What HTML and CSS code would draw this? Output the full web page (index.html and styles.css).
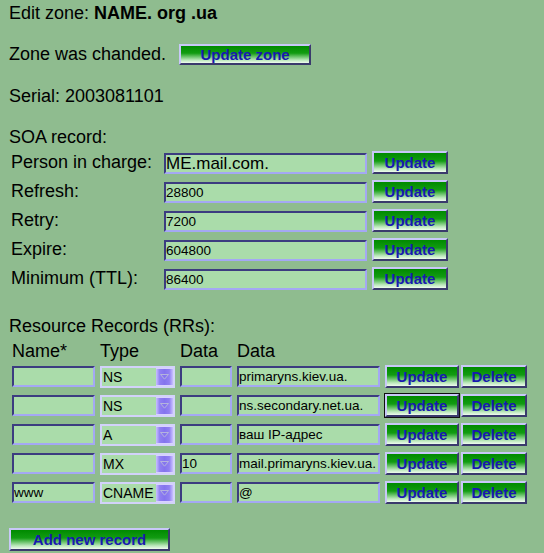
FILE: index.html
```html
<!DOCTYPE html>
<html lang="en">
<head>
<meta charset="utf-8">
<title>Edit zone</title>
<link rel="stylesheet" href="styles.css">
</head>
<body>
<form class="page">
  <div class="title">Edit zone: <b>NAME. org .ua</b></div>

  <div class="status">
    <span>Zone was chanded.</span>
    <button type="button" class="btn btn-zone">Update zone</button>
  </div>

  <div class="serial">Serial: 2003081101</div>

  <div class="section-title soa-title">SOA record:</div>
  <div class="soa-grid">
    <label class="soa-label">Person in charge:</label>
    <input class="field field-lg" value="ME.mail.com.">
    <button type="button" class="btn btn-soa">Update</button>

    <label class="soa-label">Refresh:</label>
    <input class="field" value="28800">
    <button type="button" class="btn btn-soa">Update</button>

    <label class="soa-label">Retry:</label>
    <input class="field" value="7200">
    <button type="button" class="btn btn-soa">Update</button>

    <label class="soa-label">Expire:</label>
    <input class="field" value="604800">
    <button type="button" class="btn btn-soa">Update</button>

    <label class="soa-label">Minimum (TTL):</label>
    <input class="field" value="86400">
    <button type="button" class="btn btn-soa">Update</button>
  </div>

  <div class="section-title rr-title">Resource Records (RRs):</div>
  <div class="rr-cols rr-head">
    <span>Name*</span><span>Type</span><span>Data</span><span>Data</span>
  </div>
  <div class="rr-rows">
    <div class="rr-cols rr-row">
      <input class="field" value="">
      <div class="select"><select class="select-native"><option>NS</option></select><span class="select-arrow"><svg width="9" height="6" viewBox="0 0 9 6"><path d="M0.5 0.5 H8.5 L4.5 5.2 Z" fill="none" stroke="#b4b4dc" stroke-width="1"/></svg></span></div>
      <input class="field" value="">
      <input class="field" value="primaryns.kiev.ua.">
      <div class="actions"><button type="button" class="btn btn-upd">Update</button><button type="button" class="btn btn-del">Delete</button></div>
    </div>
    <div class="rr-cols rr-row">
      <input class="field" value="">
      <div class="select"><select class="select-native"><option>NS</option></select><span class="select-arrow"><svg width="9" height="6" viewBox="0 0 9 6"><path d="M0.5 0.5 H8.5 L4.5 5.2 Z" fill="none" stroke="#b4b4dc" stroke-width="1"/></svg></span></div>
      <input class="field" value="">
      <input class="field" value="ns.secondary.net.ua.">
      <div class="actions"><button type="button" class="btn btn-upd is-focused">Update</button><button type="button" class="btn btn-del">Delete</button></div>
    </div>
    <div class="rr-cols rr-row">
      <input class="field" value="">
      <div class="select"><select class="select-native"><option>A</option></select><span class="select-arrow"><svg width="9" height="6" viewBox="0 0 9 6"><path d="M0.5 0.5 H8.5 L4.5 5.2 Z" fill="none" stroke="#b4b4dc" stroke-width="1"/></svg></span></div>
      <input class="field" value="">
      <input class="field" value="ваш IP-адрес">
      <div class="actions"><button type="button" class="btn btn-upd">Update</button><button type="button" class="btn btn-del">Delete</button></div>
    </div>
    <div class="rr-cols rr-row">
      <input class="field" value="">
      <div class="select"><select class="select-native"><option>MX</option></select><span class="select-arrow"><svg width="9" height="6" viewBox="0 0 9 6"><path d="M0.5 0.5 H8.5 L4.5 5.2 Z" fill="none" stroke="#b4b4dc" stroke-width="1"/></svg></span></div>
      <input class="field" value="10">
      <input class="field" value="mail.primaryns.kiev.ua.">
      <div class="actions"><button type="button" class="btn btn-upd">Update</button><button type="button" class="btn btn-del">Delete</button></div>
    </div>
    <div class="rr-cols rr-row">
      <input class="field" value="www">
      <div class="select"><select class="select-native"><option>CNAME</option></select><span class="select-arrow"><svg width="9" height="6" viewBox="0 0 9 6"><path d="M0.5 0.5 H8.5 L4.5 5.2 Z" fill="none" stroke="#b4b4dc" stroke-width="1"/></svg></span></div>
      <input class="field" value="">
      <input class="field" value="@">
      <div class="actions"><button type="button" class="btn btn-upd">Update</button><button type="button" class="btn btn-del">Delete</button></div>
    </div>
  </div>

  <button type="button" class="btn btn-add">Add new record</button>
</form>
</body>
</html>
```

FILE: styles.css
```css
* { box-sizing: border-box; }

html, body {
  margin: 0;
  padding: 0;
}

body {
  width: 544px;
  height: 553px;
  overflow: hidden;
  background: #8fbc8f;
  color: #000;
  font-family: "Liberation Sans", Arial, sans-serif;
  font-size: 18px;
  line-height: 21px;
}

.page {
  margin: 0;
  padding: 3px 0 0 9px;
}

.title {
  height: 21px;
}

.title b {
  font-weight: bold;
}

.status {
  display: flex;
  align-items: center;
  gap: 13px;
  height: 21px;
  margin-top: 20px;
}

.serial {
  margin-top: 21px;
  height: 21px;
}

.section-title {
  height: 21px;
}

.soa-title {
  margin-top: 20px;
}

.soa-grid {
  display: grid;
  grid-template-columns: 148px 203px 76px;
  grid-auto-rows: 23px;
  column-gap: 5px;
  row-gap: 6px;
  align-items: end;
  margin: 3px 0 0 2px;
}

.soa-label {
  align-self: center;
  white-space: nowrap;
}

.rr-title {
  margin-top: 26px;
}

.rr-cols {
  display: grid;
  grid-template-columns: 83px 75px 52px 143px 142px;
  column-gap: 5px;
  margin-left: 3px;
}

.rr-head {
  margin-top: 4px;
  height: 21px;
}

.rr-rows {
  display: flex;
  flex-direction: column;
  gap: 6px;
  margin-top: 3px;
}

.rr-row {
  height: 23px;
  align-items: center;
}

.field {
  display: block;
  width: 100%;
  height: 21px;
  margin: 0;
  padding: 0;
  border: 2px solid;
  border-color: #3c3c80 #a4a8f4 #a4a8f4 #3c3c80;
  background: #aadcaa;
  color: #000;
  font-family: "Liberation Sans", Arial, sans-serif;
  font-size: 13.5px;
  outline: none;
}

.field-lg {
  font-size: 17px;
}

.select {
  display: flex;
  height: 22px;
  border: 2px solid #d2d2fa;
  background: #aadcaa;
}

.select-native {
  flex: 1;
  min-width: 0;
  height: 100%;
  margin: 0;
  padding: 0 0 0 1px;
  border: 0;
  background: transparent;
  color: #000;
  font-family: "Liberation Sans", Arial, sans-serif;
  font-size: 14px;
  appearance: none;
  -webkit-appearance: none;
  outline: none;
}

.select-arrow {
  display: flex;
  align-items: center;
  justify-content: center;
  width: 17px;
  background: linear-gradient(to right, #c8c0ff 0%, #9080f2 22%, #8474ee 50%, #9080f2 78%, #c8c0ff 100%);
  box-shadow: inset 0 1px 0 #d8d2ff, inset 0 -1px 0 #d8d2ff;
}

.select-arrow svg {
  display: block;
}

.actions {
  display: flex;
  gap: 2px;
}

.btn {
  display: block;
  margin: 0;
  padding: 0;
  height: 23px;
  border: 2px solid;
  border-color: #c8c8f8 #3a3a6c #3a3a6c #c8c8f8;
  background: linear-gradient(to bottom, #008a00 0%, #129c12 42%, #b8e6b8 82%, #eefcee 100%);
  color: #1818b0;
  font-family: "Liberation Sans", Arial, sans-serif;
  font-weight: bold;
  font-size: 15px;
  line-height: 1;
  cursor: pointer;
}

.btn-zone {
  width: 132px;
  height: 21px;
}

.btn-soa {
  width: 76px;
}

.btn-upd {
  width: 74px;
}

.btn-del {
  width: 66px;
}

.is-focused {
  outline: 1px solid #101010;
}

.btn-add {
  width: 161px;
  margin-top: 24px;
}
```
